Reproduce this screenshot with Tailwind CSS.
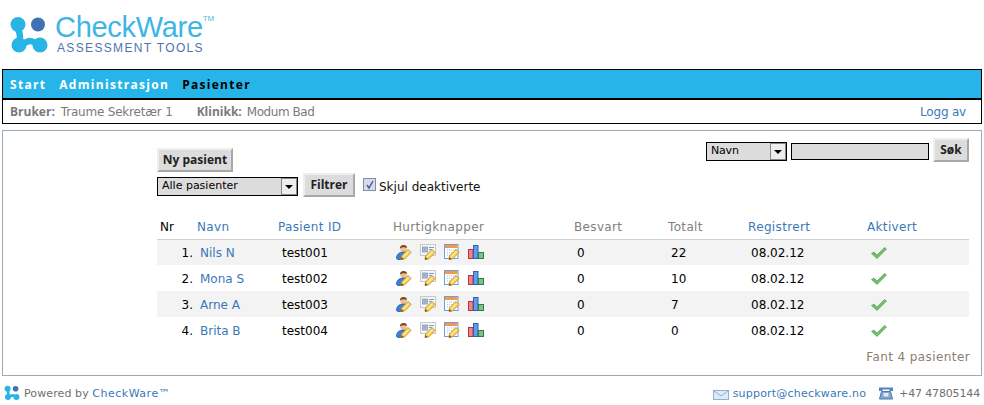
<!DOCTYPE html>
<html lang="en">
<head>
    <meta charset="UTF-8">
    <title>CheckWare Assessment Tools</title>
    <script src="https://cdn.jsdelivr.net/npm/@tailwindcss/browser@4"></script>
</head>
<body class="bg-white font-['DejaVu_Sans',sans-serif] text-[12px] text-black h-[405px] w-[984px] overflow-hidden">
    <svg width="0" height="0" class="absolute">
        <defs>
            <symbol id="logo" viewBox="0 0 40 36">
                <path d="M9 8 C9 14 11 15 11 20 C11 23 10 25 10 28 M10 28 C15 28 17 24 21 24 C25 24 27 28 31 28" fill="none" stroke="#29b4e6" stroke-width="6.500"/>
                <circle cx="9" cy="7.500" r="7.500" fill="#29b4e6"/>
                <circle cx="10" cy="28" r="7.500" fill="#29b4e6"/>
                <circle cx="31" cy="28" r="7.500" fill="#29b4e6"/>
                <circle cx="29" cy="7.500" r="7" fill="#3f72b5"/>
            </symbol>
            <symbol id="pencil" viewBox="0 0 16 16">
                <path d="M5 15.500 L5.500 12 L12 5.500 L15 8.500 L8.500 15 Z" fill="#f7d95e" stroke="#c98f30" stroke-width="1"/>
                <path d="M7.500 12.500 L12.500 7.500" stroke="#fff3b0" stroke-width="1"/>
                <path d="M5 15.500 L5.500 13 L7.500 15 Z" fill="#6b4a30"/>
            </symbol>
            <symbol id="ico-user" viewBox="0 0 16 16">
                <circle cx="7.500" cy="4.500" r="3.200" fill="#f0bd90"/>
                <path d="M4 4.500 C3.500 0 11.500 0 11 4 C9 2.800 6 3 4 4.500 Z" fill="#7a4520"/>
                <path d="M0.500 14.500 C0.500 10 3.500 8 7.500 8 C10 8 11.500 8.500 12 9.500 L7 15.500 L2 15.500 Z" fill="#3d7fd6" stroke="#25569f" stroke-width="0.800"/>
                <use href="#pencil"/>
            </symbol>
            <symbol id="ico-card" viewBox="0 0 16 16">
                <rect x="0.500" y="0.500" width="15" height="11" fill="#f6f6f6" stroke="#c8c8c8"/>
                <rect x="2.500" y="3" width="5" height="5" fill="#9cc3ee" stroke="#6f9fd8" stroke-width="0.800"/>
                <circle cx="5" cy="5" r="1.500" fill="#e59a66"/>
                <path d="M9 3.500 h5 M9 5.500 h3" stroke="#6f9fd8" stroke-width="1"/>
                <use href="#pencil"/>
            </symbol>
            <symbol id="ico-cal" viewBox="0 0 16 16">
                <rect x="0.500" y="0.500" width="13.500" height="14" fill="#fff" stroke="#6c9fdb"/>
                <rect x="1" y="1" width="12.500" height="3" fill="#f29a4a"/>
                <path d="M3 6 h9 M3 8.500 h9 M3 11 h9" stroke="#a9c4e8" stroke-width="1" stroke-dasharray="1 1"/>
                <use href="#pencil"/>
            </symbol>
            <symbol id="ico-bars" viewBox="0 0 16 16">
                <rect x="0.500" y="5.500" width="4.500" height="9" fill="#f5838a" stroke="#c0303a"/>
                <rect x="5.500" y="1.500" width="4.500" height="13" fill="#5f9ee8" stroke="#2a62ba"/>
                <rect x="10.500" y="8.500" width="5" height="6" fill="#7cc08a" stroke="#2f7d44"/>
            </symbol>
            <symbol id="ico-check" viewBox="0 0 16 12">
                <path d="M0.500 6.500 L3 5 L6 8 L13.500 0.500 L15.500 2 L6 11.500 Z" fill="#72bd6c" stroke="#5aa35a" stroke-width="0.700"/>
            </symbol>
        </defs>
    </svg>

    <!-- Logo -->
    <header class="h-[69px] pl-[9px] pt-[17px] flex items-start gap-[6px]">
        <svg class="w-[40px] h-[36px]"><use href="#logo"/></svg>
        <div class="-mt-[3px]">
            <div class="flex items-start h-[26px]">
                <span class="font-['Liberation_Sans',sans-serif] text-[29px] leading-[26px] text-[#3db5e6] tracking-[-0.300px]">CheckWare</span>
                <span class="font-['Liberation_Sans',sans-serif] text-[8px] leading-[8px] mt-[1px] text-[#5ab8e0]">TM</span>
            </div>
            <div class="font-['Liberation_Sans',sans-serif] text-[12px] leading-[14px] mt-[1px] ml-[2px] text-[#4f74ad] tracking-[1.350px]">ASSESSMENT TOOLS</div>
        </div>
    </header>

    <!-- Navigation -->
    <nav class="mx-[2px] w-[980px] h-[31px] pt-[1px] bg-[#27b5e9] border border-black border-b-2 flex items-center pl-[7px] gap-[13px] font-['Open_Sans',sans-serif] font-bold tracking-[1.300px]">
        <a class="text-white">Start</a>
        <a class="text-white">Administrasjon</a>
        <a class="text-black">Pasienter</a>
    </nav>
    <div class="mx-[2px] w-[980px] h-[24px] pt-[1px] border border-t-0 border-black flex items-center pl-[7px] pr-[15px] text-[#7a7a7a] tracking-[-0.200px]">
        <b class="mr-[6px] font-['Open_Sans',sans-serif] tracking-normal">Bruker:</b><span>Traume Sekretær 1</span>
        <b class="ml-[24px] mr-[5px] font-['Open_Sans',sans-serif] tracking-normal">Klinikk:</b><span class="tracking-[-0.450px]">Modum Bad</span>
        <a class="ml-auto text-[#3a78b8]">Logg av</a>
    </div>

    <!-- Main -->
    <main class="mx-[2px] mt-[6px] w-[980px] h-[246px] border border-[#9aabb3] pl-[154px] pr-[11px] pt-[7px]">
        <div class="flex justify-between h-[63px] pr-[1px]">
            <div class="pt-[10px]">
                <button class="block w-[76px] h-[24px] bg-[#dcdcdc] border-2 border-t-[#efefef] border-l-[#efefef] border-r-[#a8a8a8] border-b-[#a8a8a8] font-['Open_Sans',sans-serif] font-bold text-[#222] whitespace-nowrap">Ny pasient</button>
                <div class="flex items-start mt-[1px] h-[24px]">
                    <div class="mt-[4px] w-[141px] h-[19px] border border-black bg-[#dcdcdc] flex items-center justify-between pl-[4px] text-[11px]">
                        <span>Alle pasienter</span>
                        <span class="w-[16px] h-[17px] bg-[#eee] border border-[#888] flex items-center justify-center"><span class="border-x-[4px] border-t-[4px] border-x-transparent border-t-black"></span></span>
                    </div>
                    <button class="ml-[5px] w-[52px] h-[24px] bg-[#dcdcdc] border-2 border-t-[#efefef] border-l-[#efefef] border-r-[#a8a8a8] border-b-[#a8a8a8] font-['Open_Sans',sans-serif] font-bold text-[#222]">Filtrer</button>
                    <span class="mt-[5px] ml-[8px] w-[13px] h-[13px] border border-[#7f8fa8] bg-[#d8dce4] flex items-center justify-center">
                        <svg class="w-[10px] h-[10px]" viewBox="0 0 10 10"><path d="M2 5 L4 8 L8 1" fill="none" stroke="#4a5fb0" stroke-width="1.500"/></svg>
                    </span>
                    <label class="mt-[5px] ml-[3px] text-[#111]">Skjul deaktiverte</label>
                </div>
            </div>
            <div class="flex items-start">
                <div class="w-[81px] h-[19px] mt-[4px] border border-black bg-[#dcdcdc] flex items-center justify-between pl-[4px] text-[11px] tracking-[-0.200px]">
                    <span>Navn</span>
                    <span class="w-[16px] h-[17px] bg-[#eee] border border-[#888] flex items-center justify-center"><span class="border-x-[4px] border-t-[4px] border-x-transparent border-t-black"></span></span>
                </div>
                <div class="ml-[4px] w-[138px] h-[17px] mt-[5px] border border-black bg-[#dcdcdc]"></div>
                <button class="ml-[4px] w-[36px] h-[24px] bg-[#dcdcdc] border-2 border-t-[#efefef] border-l-[#efefef] border-r-[#a8a8a8] border-b-[#a8a8a8] font-['Open_Sans',sans-serif] font-bold text-[#222]">Søk</button>
            </div>
        </div>

        <table class="w-[812px] table-fixed border-collapse mt-[15px]">
            <colgroup>
                <col class="w-[37px]"><col class="w-[81px]"><col class="w-[115px]"><col class="w-[181px]"><col class="w-[94px]"><col class="w-[80px]"><col class="w-[119px]"><col>
            </colgroup>
            <thead>
                <tr class="h-[23px] text-left font-normal border-b border-[#cfcfcf] tracking-[0.350px]">
                    <th class="font-normal pl-[3px] tracking-normal">Nr</th>
                    <th class="font-normal pl-[3px] text-[#3a78b8]">Navn</th>
                    <th class="font-normal pl-[3px] text-[#3a78b8]">Pasient ID</th>
                    <th class="font-normal pl-[3px] text-[#808080]">Hurtigknapper</th>
                    <th class="font-normal pl-[3px] text-[#808080]">Besvart</th>
                    <th class="font-normal pl-[3px] text-[#808080]">Totalt</th>
                    <th class="font-normal pl-[3px] text-[#3a78b8]">Registrert</th>
                    <th class="font-normal pl-[3px] text-[#3a78b8]">Aktivert</th>
                </tr>
            </thead>
            <tbody>
                <tr class="h-[26px] bg-[#f3f3f3]">
                    <td class="pt-[1px] text-right pr-[1px]">1.</td><td class="pt-[1px] pl-[6px] text-[#3a78b8]">Nils N</td><td class="pt-[1px] pl-[7px]">test001</td>
                    <td class="pl-[6px]"><div class="flex gap-[8px]"><svg class="w-[16px] h-[16px]"><use href="#ico-user"/></svg><svg class="w-[16px] h-[16px]"><use href="#ico-card"/></svg><svg class="w-[16px] h-[16px]"><use href="#ico-cal"/></svg><svg class="w-[16px] h-[16px]"><use href="#ico-bars"/></svg></div></td>
                    <td class="pt-[1px] pl-[6px]">0</td><td class="pt-[1px] pl-[6px]">22</td><td class="pt-[1px] pl-[6px]">08.02.12</td>
                    <td class="pt-[1px] pl-[7px]"><svg class="w-[16px] h-[12px]"><use href="#ico-check"/></svg></td>
                </tr>
                <tr class="h-[26px]">
                    <td class="pt-[1px] text-right pr-[1px]">2.</td><td class="pt-[1px] pl-[6px] text-[#3a78b8]">Mona S</td><td class="pt-[1px] pl-[7px]">test002</td>
                    <td class="pl-[6px]"><div class="flex gap-[8px]"><svg class="w-[16px] h-[16px]"><use href="#ico-user"/></svg><svg class="w-[16px] h-[16px]"><use href="#ico-card"/></svg><svg class="w-[16px] h-[16px]"><use href="#ico-cal"/></svg><svg class="w-[16px] h-[16px]"><use href="#ico-bars"/></svg></div></td>
                    <td class="pt-[1px] pl-[6px]">0</td><td class="pt-[1px] pl-[6px]">10</td><td class="pt-[1px] pl-[6px]">08.02.12</td>
                    <td class="pt-[1px] pl-[7px]"><svg class="w-[16px] h-[12px]"><use href="#ico-check"/></svg></td>
                </tr>
                <tr class="h-[26px] bg-[#f3f3f3]">
                    <td class="pt-[1px] text-right pr-[1px]">3.</td><td class="pt-[1px] pl-[6px] text-[#3a78b8]">Arne A</td><td class="pt-[1px] pl-[7px]">test003</td>
                    <td class="pl-[6px]"><div class="flex gap-[8px]"><svg class="w-[16px] h-[16px]"><use href="#ico-user"/></svg><svg class="w-[16px] h-[16px]"><use href="#ico-card"/></svg><svg class="w-[16px] h-[16px]"><use href="#ico-cal"/></svg><svg class="w-[16px] h-[16px]"><use href="#ico-bars"/></svg></div></td>
                    <td class="pt-[1px] pl-[6px]">0</td><td class="pt-[1px] pl-[6px]">7</td><td class="pt-[1px] pl-[6px]">08.02.12</td>
                    <td class="pt-[1px] pl-[7px]"><svg class="w-[16px] h-[12px]"><use href="#ico-check"/></svg></td>
                </tr>
                <tr class="h-[26px]">
                    <td class="pt-[1px] text-right pr-[1px]">4.</td><td class="pt-[1px] pl-[6px] text-[#3a78b8]">Brita B</td><td class="pt-[1px] pl-[7px]">test004</td>
                    <td class="pl-[6px]"><div class="flex gap-[8px]"><svg class="w-[16px] h-[16px]"><use href="#ico-user"/></svg><svg class="w-[16px] h-[16px]"><use href="#ico-card"/></svg><svg class="w-[16px] h-[16px]"><use href="#ico-cal"/></svg><svg class="w-[16px] h-[16px]"><use href="#ico-bars"/></svg></div></td>
                    <td class="pt-[1px] pl-[6px]">0</td><td class="pt-[1px] pl-[6px]">0</td><td class="pt-[1px] pl-[6px]">08.02.12</td>
                    <td class="pt-[1px] pl-[7px]"><svg class="w-[16px] h-[12px]"><use href="#ico-check"/></svg></td>
                </tr>
            </tbody>
        </table>
        <div class="text-right mt-[5px] text-[#8a8070] tracking-[0.400px]">Fant 4 pasienter</div>
    </main>

    <!-- Footer -->
    <footer class="flex items-center justify-between pl-[4px] pr-[4px] mt-[10px] text-[#707070] text-[11px]">
        <div class="flex items-center gap-[4px]">
            <svg class="w-[16px] h-[16px] -mt-[2px]"><use href="#logo"/></svg>
            <span class="tracking-[0.100px]">Powered by <span class="text-[#3a78b8] tracking-[0.500px]">CheckWare™</span></span>
        </div>
        <div class="flex items-center">
            <svg class="w-[16px] h-[10px] mt-[2px]" viewBox="0 0 16 10"><rect x="0.500" y="0.500" width="15" height="9" fill="#dfeaf6" stroke="#8fb0d4"/><path d="M1 1 L8 6 L15 1" fill="none" stroke="#8fb0d4"/></svg>
            <span class="ml-[4px] text-[#3a78b8] tracking-[0.200px]">support@checkware.no</span>
            <svg class="ml-[12px] w-[16px] h-[14px] -mt-[2px]" viewBox="0 0 16 14"><path d="M1 5 V1.500 H15 V5 H11.500 V3.500 H4.500 V5 Z" fill="#4f86bd"/><path d="M3.500 5.500 H12.500 L14.500 13 H1.500 Z" fill="#7fa5cc" stroke="#4f7aa8"/><rect x="5.500" y="7" width="5" height="3.500" fill="#dfeaf6"/></svg>
            <span class="ml-[5px] tracking-[-0.150px]">+47 47805144</span>
        </div>
    </footer>
</body>
</html>
